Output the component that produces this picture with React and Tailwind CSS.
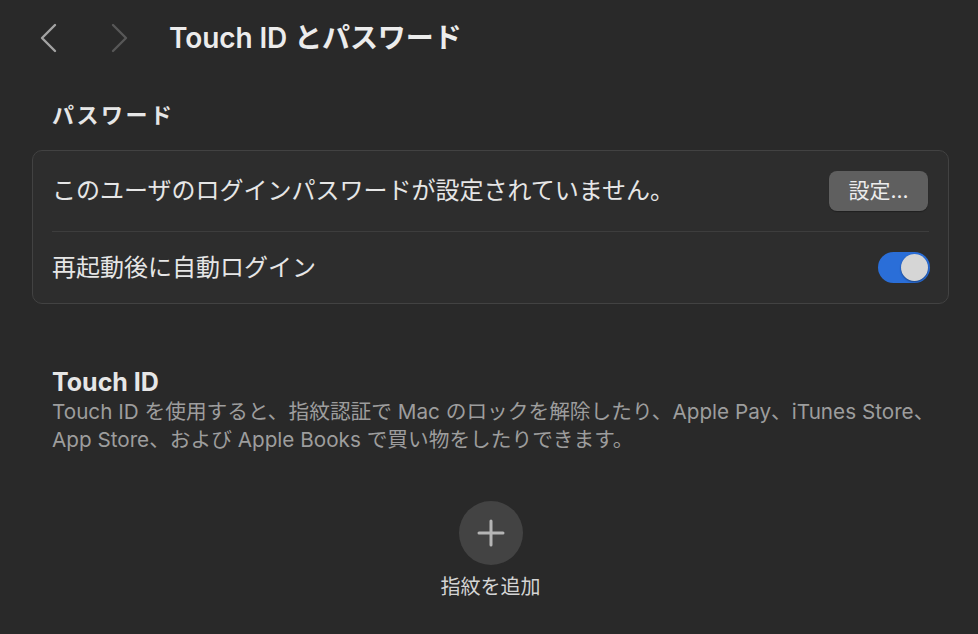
import React from "react";

const font = { fontFamily: 'Inter, "Noto Sans CJK JP", sans-serif' };

export default function App() {
  return (
    <div
      className="w-[978px] h-[634px] bg-[#292929] text-[#e6e6e6] overflow-hidden flex flex-col"
      style={font}
    >
      {/* Header */}
      <div className="h-[75px] flex items-center pl-[38px]">
        <svg width="20" height="30" viewBox="0 0 20 30" fill="none">
          <path d="M17 2 L4 15 L17 28" stroke="#a3a3a3" strokeWidth="2.4" strokeLinecap="round" strokeLinejoin="round" />
        </svg>
        <svg width="20" height="30" viewBox="0 0 20 30" fill="none" className="ml-[52px]">
          <path d="M3 2 L16 15 L3 28" stroke="#575757" strokeWidth="2.4" strokeLinecap="round" strokeLinejoin="round" />
        </svg>
        <div className="ml-[39px] text-[28px] font-semibold text-[#ececec] tracking-[-0.1px]">
          Touch ID とパスワード
        </div>
      </div>

      <div className="pl-[32px] pr-[29px] flex flex-col">
        <div className="pl-[20px] mt-[24px] text-[22px] font-bold tracking-[2.5px] text-[#e6e6e6] leading-[32px]">
          パスワード
        </div>

        <div className="mt-[19px] rounded-[10px] border border-[#424242] bg-[#2d2d2d] px-[19px]">
          <div className="h-[80px] flex items-center justify-between">
            <div className="text-[24px] text-[#e6e6e6]">
              このユーザのログインパスワードが設定されていません。
            </div>
            <div className="w-[99px] h-[40px] rounded-[8px] bg-[#5f5f5f] text-[#ececec] text-[21px] flex items-center justify-center mr-[1px] shadow-[0_1px_1px_rgba(0,0,0,0.3)]">
              設定...
            </div>
          </div>
          <div className="h-px bg-[#3d3d3d]" />
          <div className="h-[71px] flex items-center justify-between">
            <div className="text-[24px] text-[#e6e6e6]">再起動後に自動ログイン</div>
            <div className="w-[52px] h-[31px] rounded-full bg-[#2a6ed8] flex items-center justify-end pr-[2px] mr-[-1px]">
              <div className="w-[27px] h-[27px] rounded-full bg-[#d6d6d6] shadow-[0_1px_2px_rgba(0,0,0,0.4)]" />
            </div>
          </div>
        </div>

        <div className="pl-[20px] mt-[62px] text-[25px] font-bold text-[#e6e6e6] leading-[32px]">
          Touch ID
        </div>
        <div className="pl-[20px] text-[20.7px] text-[#9d9d9d] leading-[28px]">
          Touch ID を使用すると、指紋認証で Mac のロックを解除したり、Apple Pay、iTunes Store、
          <br />
          App Store、および Apple Books で買い物をしたりできます。
        </div>

        <div className="flex flex-col items-center mt-[47px]">
          <div className="w-[64px] h-[64px] rounded-full bg-[#434343] flex items-center justify-center">
            <svg width="30" height="30" viewBox="0 0 30 30">
              <path d="M15 3 V27 M3 15 H27" stroke="#b5b5b5" strokeWidth="3" strokeLinecap="round" />
            </svg>
          </div>
          <div className="mt-[7px] text-[20px] text-[#d4d4d4]">指紋を追加</div>
        </div>
      </div>
    </div>
  );
}
